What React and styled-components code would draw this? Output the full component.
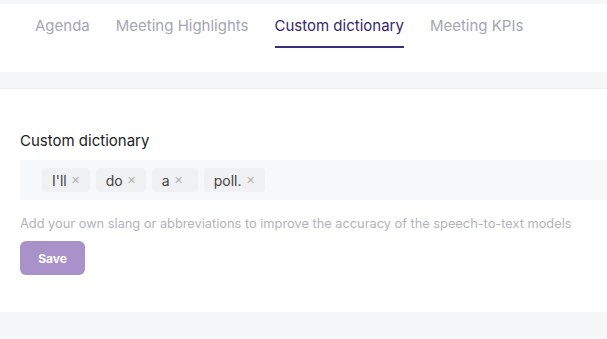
import React from 'react';
import styled, { createGlobalStyle } from 'styled-components';

const GlobalStyle = createGlobalStyle`
  html, body {
    margin: 0;
    padding: 0;
    background: #f6f7f8;
    font-family: Inter, "Open Sans", sans-serif;
  }
  * { box-sizing: border-box; }
`;

//-- STYLES --//
const Page = styled.div`
  width: 607px;
  height: 339px;
  overflow: hidden;
  padding-top: 4px;
  background: #f6f7f8;
`;

const Header = styled.div`
  background: #fff;
  height: 68px;
  padding-left: 35px;
  display: flex;
  align-items: flex-start;
`;

const Tabs = styled.nav`
  display: flex;
  gap: 26px;
`;

const Tab = styled.div`
  padding-top: 12px;
  height: 44px;
  font-size: 15px;
  font-weight: 400;
  color: ${p => (p.$active ? '#35286b' : '#a6a6b2')};
  border-bottom: 2px solid ${p => (p.$active ? '#3a2e7c' : 'transparent')};
  white-space: nowrap;
`;

const Card = styled.section`
  margin-top: 16px;
  background: #fff;
  border-top: 1px solid #eceef0;
  height: 224px;
  padding: 42px 0 0 20px;
`;

const Label = styled.div`
  font-size: 15px;
  font-weight: 400;
  color: #222;
  margin-bottom: 10px;
`;

const TagInput = styled.div`
  background: #f6f8f9;
  height: 40px;
  padding-left: 22px;
  display: flex;
  align-items: center;
  gap: 6px;
`;

const Chip = styled.span`
  display: inline-flex;
  align-items: center;
  height: 24px;
  padding: 0 10px;
  background: #eff1f3;
  border-radius: 3px;
  font-size: 14px;
  color: #444;
  min-width: 46px;
`;

const Close = styled.span`
  margin-left: 4px;
  font-size: 11px;
  color: #b4b4b4;
`;

const Hint = styled.p`
  margin: 16px 0 10px;
  font-size: 12.8px;
  color: #b3b3bc;
  white-space: nowrap;
`;

const SaveButton = styled.button`
  width: 65px;
  height: 34px;
  border: none;
  border-radius: 6px;
  background: #a892c9;
  color: #fff;
  font-family: inherit;
  font-weight: 700;
  font-size: 12px;
`;

const tabs = ['Agenda', 'Meeting Highlights', 'Custom dictionary', 'Meeting KPIs'];
const words = ["I'll", 'do', 'a', 'poll.'];

//-- COMPONENT --//
const App = () => {
  return (
    <Page>
      <GlobalStyle />
      <Header>
        <Tabs>
          {tabs.map(t => (
            <Tab key={t} $active={t === 'Custom dictionary'}>{t}</Tab>
          ))}
        </Tabs>
      </Header>
      <Card>
        <Label>Custom dictionary</Label>
        <TagInput>
          {words.map(w => (
            <Chip key={w}>{w}<Close>✕</Close></Chip>
          ))}
        </TagInput>
        <Hint>Add your own slang or abbreviations to improve the accuracy of the speech-to-text models</Hint>
        <SaveButton>Save</SaveButton>
      </Card>
    </Page>
  );
};

export default App;
